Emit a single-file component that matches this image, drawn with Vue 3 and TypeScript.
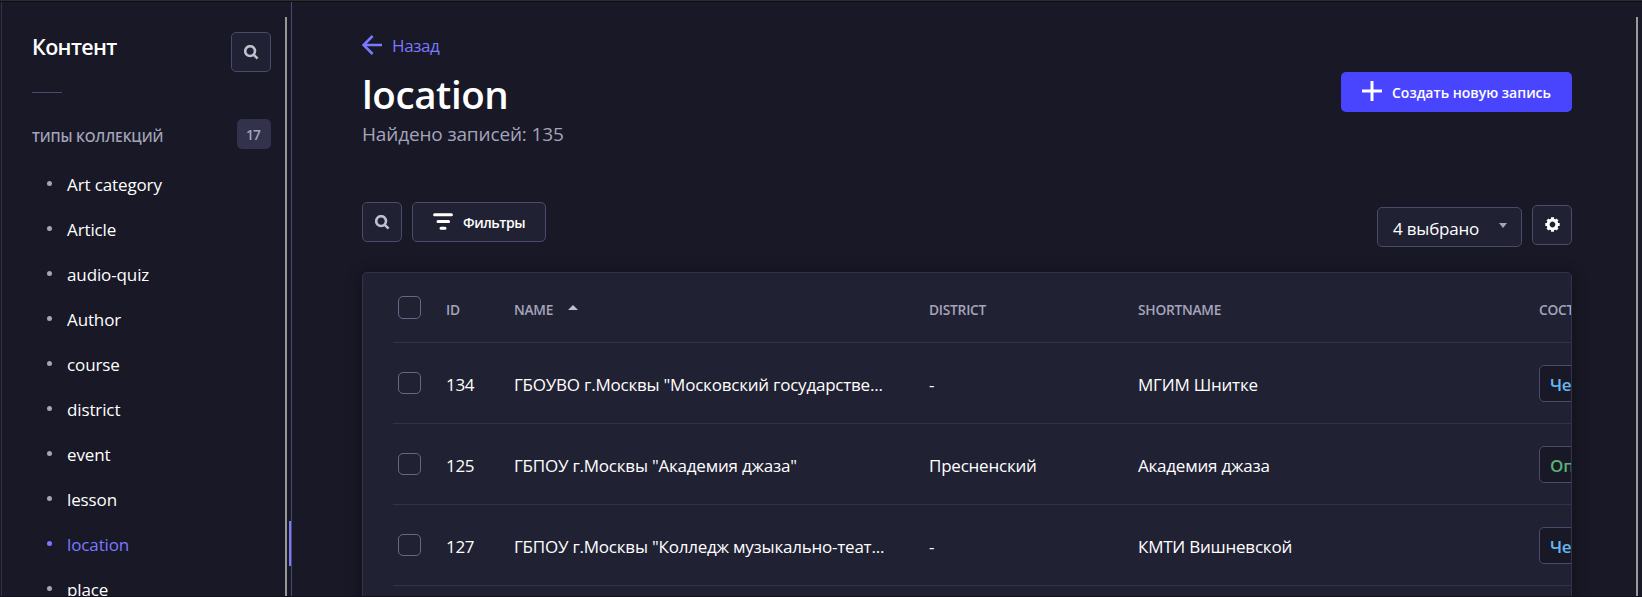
<script setup lang="ts">
interface Row {
  id: number
  name: string
  district: string
  shortname: string
  state: string
  published: boolean
}

const collections: string[] = [
  'Art category', 'Article', 'audio-quiz', 'Author', 'course',
  'district', 'event', 'lesson', 'location', 'place',
]
const active = 'location'

const rows: Row[] = [
  { id: 134, name: 'ГБОУВО г.Москвы "Московский государстве...', district: '-', shortname: 'МГИМ Шнитке', state: 'Черновик', published: false },
  { id: 125, name: 'ГБПОУ г.Москвы "Академия джаза"', district: 'Пресненский', shortname: 'Академия джаза', state: 'Опубликовано', published: true },
  { id: 127, name: 'ГБПОУ г.Москвы "Колледж музыкально-теат...', district: '-', shortname: 'КМТИ Вишневской', state: 'Черновик', published: false },
]
</script>

<template>
  <div class="app">
    <aside class="sidebar">
      <header class="side-head">
        <h2>Контент</h2>
        <button class="icon-btn" aria-label="Поиск">
          <svg class="search" viewBox="0 0 15 15"><circle cx="6.1" cy="6.1" r="4.9" /><path d="M9.8 9.8 13.6 13.6" /></svg>
        </button>
      </header>
      <div class="divider"></div>
      <div class="group">
        <span class="group-title">ТИПЫ КОЛЛЕКЦИЙ</span>
        <span class="count">17</span>
      </div>
      <ul class="nav">
        <li v-for="c in collections" :key="c" :class="{ active: c === active }">
          <i class="dot"></i><span>{{ c }}</span>
        </li>
      </ul>
      <div class="side-scroll"></div>
    </aside>

    <main class="main">
      <a class="back">
        <svg viewBox="0 0 20 20"><path d="M20 10H1.6M10.6 1 1.6 10l9 9" /></svg>
        <span>Назад</span>
      </a>
      <div class="title-row">
        <div>
          <h1>location</h1>
          <p class="subtitle">Найдено записей: 135</p>
        </div>
        <button class="create">
          <svg viewBox="0 0 20 20"><path d="M10 0v20M0 10h20" /></svg>
          <span>Создать новую запись</span>
        </button>
      </div>
      <div class="tools">
        <button class="icon-btn" aria-label="Поиск">
          <svg class="search" viewBox="0 0 15 15"><circle cx="6.1" cy="6.1" r="4.9" /><path d="M9.8 9.8 13.6 13.6" /></svg>
        </button>
        <button class="filters">
          <svg viewBox="0 0 20 17"><path d="M1.6 1.7h16.8M5 8.5h10.6M8 15.2h4" /></svg>
          <span>Фильтры</span>
        </button>
        <div class="select"><span>4 выбрано</span><i class="caret"></i></div>
        <button class="icon-btn gear" aria-label="Настройки">
          <svg viewBox="-7.5 -7.5 15 15">
            <circle r="4.4" /><path d="M0-7.2V-4M0 7.2V4M-7.2 0H-4M7.2 0H4M-5-5-3-3M5-5 3-3M-5 5-3 3M5 5 3 3" />
          </svg>
        </button>
      </div>
      <section class="card">
        <div class="row head">
          <i class="check"></i>
          <span class="id">ID</span>
          <span>NAME<i class="sort"></i></span>
          <span>DISTRICT</span>
          <span>SHORTNAME</span>
          <span>СОСТОЯНИЕ</span>
        </div>
        <div v-for="r in rows" :key="r.id" class="row">
          <i class="check"></i>
          <span class="id">{{ r.id }}</span>
          <span>{{ r.name }}</span>
          <span>{{ r.district }}</span>
          <span>{{ r.shortname }}</span>
          <b class="badge" :class="{ published: r.published }">{{ r.state }}</b>
        </div>
      </section>
      <div class="main-scroll"></div>
    </main>
  </div>
</template>

<style>
html, body { margin: 0; background: #181826; overflow: hidden; }
</style>

<style scoped>
* { box-sizing: border-box; }
.app {
  display: flex;
  width: 1642px;
  height: 597px;
  overflow: hidden;
  position: relative;
  background: #181826;
  color: #fff;
  font: 17px/25px "Segoe UI", "Open Sans", "Noto Sans", sans-serif;
  border-top: 1px solid #2b2b32;
  border-bottom: 1px solid #111119;
  box-shadow: inset 0 1px #0d0d14;
}
button { font: inherit; color: inherit; padding: 0; margin: 0; }
span { white-space: nowrap; }
svg { display: block; flex: none; fill: none; }

.sidebar {
  position: relative;
  flex: none;
  width: 291px;
  margin-left: 1px;
  margin-top: 1px;
  border-left: 1px solid #32324d;
  border-right: 1px solid #4a4a6a;
}
.side-head { display: flex; justify-content: space-between; padding: 30px 20px 0 30px; }
h2 { margin: 0; font-size: 21.5px; line-height: 30px; font-weight: 600; letter-spacing: -0.65px; }
.icon-btn {
  display: flex; align-items: center; justify-content: center; flex: none;
  width: 40px; height: 40px;
  background: #212134; border: 1px solid #4a4a6a; border-radius: 5px;
}
.search { width: 15px; height: 15px; stroke: #c0c0cf; stroke-width: 2.6; }
.side-head .search { margin-left: 1px; }
.divider { width: 30px; height: 1px; margin: 20px 0 0 30px; background: #4a4a6a; }
.group { display: flex; justify-content: space-between; align-items: center; margin: 26px 20px 0 30px; height: 30px; }
.group-title { font-size: 13.75px; font-weight: 600; letter-spacing: -0.1px; color: #a5a5ba; padding-top: 4px; }
.count { width: 34px; height: 30px; border-radius: 5px; background: #32324d; color: #a5a5ba; font-size: 13.75px; font-weight: 600; line-height: 32px; text-align: center; letter-spacing: -0.9px; padding-right: 2px; }
.nav { list-style: none; margin: 12px 0 0; padding: 0; }
.nav li { display: flex; align-items: center; height: 45px; padding-left: 45px; letter-spacing: -0.12px; }
.nav li span { margin-top: 1px; }
.dot { width: 5px; height: 5px; border-radius: 50%; background: #a5a5ba; margin: -1px 15px 0 0; }
.active { color: #7b79ff; border-right: 2px solid #7b79ff; }
.active .dot { background: #7b79ff; }
.side-scroll { position: absolute; right: 4px; top: 15px; bottom: 0; width: 2px; background: #999792; }

.main { position: relative; flex: 1; min-width: 0; padding: 34px 70px 0; }
.back { display: flex; align-items: center; gap: 10px; height: 20px; color: #7b79ff; letter-spacing: -0.4px; }
.back svg { width: 20px; height: 20px; stroke: #7b79ff; stroke-width: 2.5; }
.title-row { display: flex; justify-content: space-between; margin-top: 14px; }
h1 { margin: 0; font-size: 38.5px; line-height: 50px; font-weight: 600; letter-spacing: -0.4px; }
.subtitle { margin: 0; font-size: 19px; line-height: 30px; letter-spacing: -0.15px; color: #a5a5ba; }
.create { display: flex; align-items: center; gap: 10px; width: 231px; height: 40px; margin-top: 3px; padding-left: 21px; background: #4945ff; border: 0; border-radius: 5px; font-size: 14px; font-weight: 600; }
.create svg { width: 20px; height: 20px; margin-top: -2px; stroke: #fff; stroke-width: 3; }
.tools { display: flex; margin-top: 53px; }
.filters { display: flex; align-items: center; gap: 10px; width: 134px; height: 40px; margin-left: 10px; padding-left: 20px; background: #212134; border: 1px solid #4a4a6a; border-radius: 5px; font-size: 14px; font-weight: 600; letter-spacing: -0.45px; }
.filters svg { width: 20px; height: 17px; margin-top: -2px; stroke: #fff; stroke-width: 3; stroke-linecap: round; }
.select { display: flex; align-items: center; justify-content: space-between; width: 145px; height: 40px; margin: 5px 0 0 auto; padding: 2px 14px 0 15px; background: #212134; border: 1px solid #4a4a6a; border-radius: 5px; letter-spacing: -0.2px; }
.caret { margin-top: -5px; border: 4px solid transparent; border-top: 5px solid #a5a5ba; border-bottom: 0; }
.gear { margin: 3px 0 0 10px; }
.gear svg { width: 15px; height: 15px; margin-top: -1px; stroke: #fff; stroke-width: 3; }

.card { height: 400px; margin-top: 25px; padding-left: 30px; background: #212134; border: 1px solid #32324d; border-radius: 5px; overflow: hidden; box-shadow: 0 2px 15px rgba(3, 3, 5, 0.35); }
.row { display: grid; grid-template-columns: 23px 93px 415px 209px 401px 200px; align-items: center; width: 1350px; height: 81px; padding-left: 5px; border-bottom: 1px solid #32324d; letter-spacing: -0.22px; }
.row span { padding-top: 2px; }
.row .id { padding-left: 25px; letter-spacing: -0.3px; }
.head { height: 70px; font-size: 13.75px; font-weight: 600; letter-spacing: -0.25px; color: #a5a5ba; }
.head span { padding-top: 4px; }
.check { width: 23px; height: 22px; border: 1px solid #666687; border-radius: 5px; }
.head .check { height: 23px; }
.sort { display: inline-block; margin-left: 15px; vertical-align: 5px; border: 5px solid transparent; border-bottom-color: #c0c0cf; border-top: 0; }
.badge { width: 120px; height: 37px; border: 1px solid #4a4a6a; border-radius: 5px; background: #181826; color: #66b7f1; font-weight: 600; line-height: 37px; padding-left: 10px; }
.badge.published { color: #5cb176; }
.main-scroll { position: absolute; right: 4px; top: 16px; bottom: 0; width: 2px; background: #999; }
</style>
